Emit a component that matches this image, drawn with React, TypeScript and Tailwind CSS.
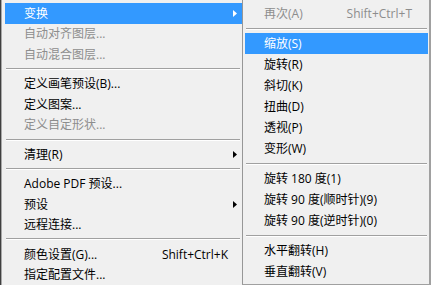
import React from "react";

type Item =
    | { kind: "sep" }
    | {
          kind: "item";
          label: string;
          shortcut?: string;
          disabled?: boolean;
          active?: boolean;
          submenu?: boolean;
      };

const mainItems: Item[] = [
    { kind: "item", label: "变换", active: true, submenu: true },
    { kind: "item", label: "自动对齐图层...", disabled: true },
    { kind: "item", label: "自动混合图层...", disabled: true },
    { kind: "sep" },
    { kind: "item", label: "定义画笔预设(B)..." },
    { kind: "item", label: "定义图案..." },
    { kind: "item", label: "定义自定形状...", disabled: true },
    { kind: "sep" },
    { kind: "item", label: "清理(R)", submenu: true },
    { kind: "sep" },
    { kind: "item", label: "Adobe PDF 预设..." },
    { kind: "item", label: "预设", submenu: true },
    { kind: "item", label: "远程连接..." },
    { kind: "sep" },
    { kind: "item", label: "颜色设置(G)...", shortcut: "Shift+Ctrl+K" },
    { kind: "item", label: "指定配置文件..." },
];

const subItems: Item[] = [
    { kind: "item", label: "再次(A)", shortcut: "Shift+Ctrl+T", disabled: true },
    { kind: "sep" },
    { kind: "item", label: "缩放(S)", active: true },
    { kind: "item", label: "旋转(R)" },
    { kind: "item", label: "斜切(K)" },
    { kind: "item", label: "扭曲(D)" },
    { kind: "item", label: "透视(P)" },
    { kind: "item", label: "变形(W)" },
    { kind: "sep" },
    { kind: "item", label: "旋转 180 度(1)" },
    { kind: "item", label: "旋转 90 度(顺时针)(9)" },
    { kind: "item", label: "旋转 90 度(逆时针)(0)" },
    { kind: "sep" },
    { kind: "item", label: "水平翻转(H)" },
    { kind: "item", label: "垂直翻转(V)" },
];

function Arrow({ white }: { white?: boolean }) {
    return (
        <svg width="4" height="7" viewBox="0 0 4 7" className="shrink-0">
            <path d="M0 0 L4 3.5 L0 7 Z" fill={white ? "#ffffff" : "#000000"} />
        </svg>
    );
}

function MenuRows({ items, sub }: { items: Item[]; sub?: boolean }) {
    return (
        <>
            {items.map((item, i) => {
                if (item.kind === "sep") {
                    return (
                        <div key={i} className="h-[9px] flex items-center">
                            <div
                                className={`h-[2px] w-full border-t border-[#a0a0a0] border-b border-b-white ${
                                    sub ? "mx-[1px]" : "ml-[1px] mr-[2px]"
                                }`}
                            />
                        </div>
                    );
                }
                const color = item.active
                    ? "text-white"
                    : item.disabled
                      ? "text-[#8d8d8d]"
                      : "text-black";
                return (
                    <div
                        key={i}
                        className={`flex h-[21px] items-center pl-[19px] pt-[1px] ${
                            sub ? "pr-[16px]" : "pr-[5px]"
                        } ${item.active ? "bg-[#3399ff]" : ""} ${color}`}
                    >
                        <span className="flex-1 whitespace-nowrap">{item.label}</span>
                        {item.shortcut && (
                            <span className="whitespace-nowrap">{item.shortcut}</span>
                        )}
                        {!sub && (
                            <span className="ml-[5px] flex w-[4px] justify-end">
                                {item.submenu && <Arrow white={item.active} />}
                            </span>
                        )}
                    </div>
                );
            })}
        </>
    );
}

export default function App() {
    return (
        <div
            className="flex h-[285px] w-[431px] overflow-hidden bg-[#f0f0f0] text-[12px] leading-none"
            style={{ fontFamily: '"Open Sans", "Noto Sans CJK SC", sans-serif' }}
        >
            <div className="flex w-[242px] shrink-0 border-l border-[#404040]">
                <div className="flex flex-1 flex-col border-l border-[#a8a8a8] pl-[3px] pt-[3px]">
                    <MenuRows items={mainItems} />
                </div>
            </div>
            <div className="flex h-[285px] flex-1 flex-col border-l border-[#979797] border-r-2 border-r-[#a0a0a0] border-b border-b-[#a0a0a0] pl-[2px] pr-[1px] pt-[3px]">
                <MenuRows items={subItems} sub />
            </div>
        </div>
    );
}
